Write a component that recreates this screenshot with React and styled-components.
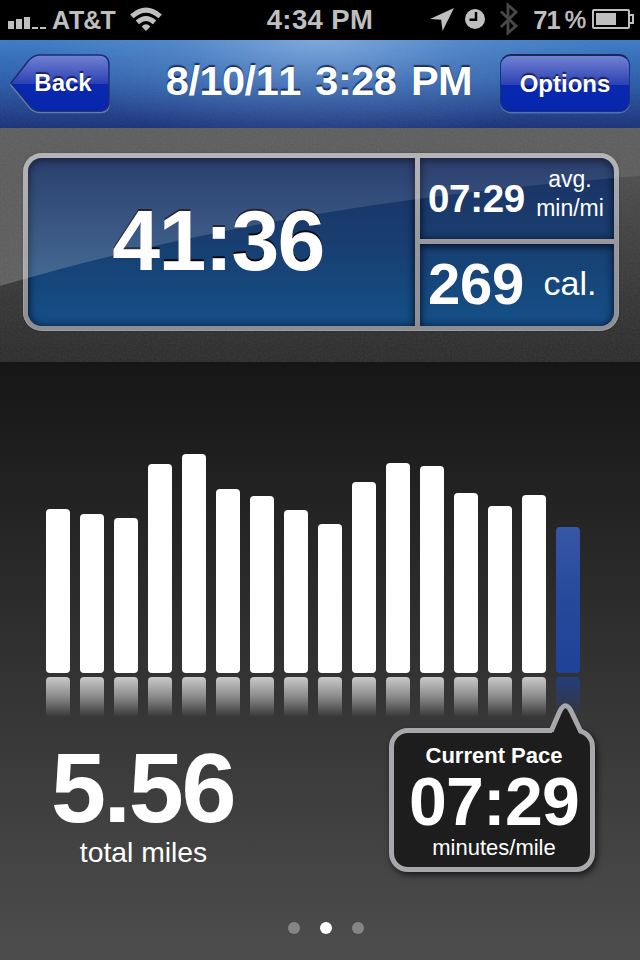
import React from "react"
import styled, { createGlobalStyle, css } from "styled-components"

const GlobalStyle = createGlobalStyle`
  * {
    box-sizing: border-box;
  }

  body {
    margin: 0;
    background: #000;
    font-family: "Liberation Sans", Arial, Helvetica, sans-serif;
    font-kerning: none;
    -webkit-font-smoothing: antialiased;
  }

  svg {
    display: block;
  }
`

const Screen = styled.div`
  display: flex;
  flex-direction: column;
  width: 640px;
  height: 960px;
  overflow: hidden;
  color: #fff;
`

/* Status bar */

const StatusBar = styled.header`
  display: grid;
  grid-template-columns: 1fr auto 1fr;
  align-items: center;
  height: 40px;
  padding: 0 6px 0 8px;
  background: #000;
  color: #bfbfbf;
  font-weight: 700;
  line-height: 40px;
`

const StatusGroup = styled.div`
  display: flex;
  align-items: center;
  justify-content: ${props => (props.$end ? "flex-end" : "flex-start")};
  height: 40px;
`

const Carrier = styled.span`
  width: 84px;
  padding-left: 6px;
  font-size: 25px;
  letter-spacing: -1px;
`

const Clock = styled.time`
  padding-right: 2px;
  font-size: 27.5px;
  letter-spacing: 0.4px;
`

const Percent = styled.span`
  display: flex;
  gap: 5px;
  padding: 0 7px 0 14px;
  font-size: 25.5px;
  letter-spacing: -1px;
`

const PercentSign = styled.span`
  font-size: 24px;
  font-weight: 400;
  -webkit-text-stroke: 0.6px #bfbfbf;
`

/* Navigation bar */

const NavBar = styled.nav`
  position: relative;
  display: flex;
  align-items: center;
  height: 88px;
  padding: 0 10px 2px;
  background: radial-gradient(
      ellipse 290px 105px at 50% 0,
      rgba(175, 205, 240, 0.55),
      rgba(130, 170, 220, 0.26) 50%,
      rgba(130, 170, 220, 0)
    ),
    linear-gradient(#3c7bc6, #2a5ba8 50%, #1b3179);
`

const NavTitle = styled.h1`
  position: relative;
  flex: 1;
  margin: 0;
  padding: 0 0 4px 28px;
  font-size: 41.5px;
  line-height: 80px;
  letter-spacing: -0.5px;
  word-spacing: 3.5px;
  text-align: center;
  white-space: nowrap;
  text-shadow: 0 -2px 1px rgba(10, 25, 60, 0.75);
`

const buttonText = css`
  color: #fff;
  font: 700 24px/58px "Liberation Sans", Arial, sans-serif;
  text-shadow: 0 -2px 1px rgba(5, 10, 70, 0.7);
`

const OptionsButton = styled.button`
  ${buttonText}
  position: relative;
  width: 130px;
  height: 58px;
  padding: 0;
  border: 1.5px solid #1c307f;
  border-top: 2px solid #19275a;
  border-radius: 11px;
  line-height: 54px;
  background: linear-gradient(#7282d2, #4356bd 35%, #2b41b4 52%, #0828b0 53%, #0627ac);
  box-shadow: 0 1.5px 0 rgba(140, 165, 220, 0.45);
`

const BackButton = styled.button`
  ${buttonText}
  position: relative;
  width: 100px;
  height: 58px;
  padding: 0 0 0 6px;
  border: 0;
  background: none;
`

const BackShape = styled.svg`
  position: absolute;
  inset: 0;
`

const ButtonLabel = styled.span`
  position: relative;
`

/* Stats */

const Summary = styled.section`
  position: relative;
  height: 234px;
  padding: 25px 21px 31px 23px;
  background: linear-gradient(#565656, #454545 35%, #353535 72%, #2b2b2b);
`

const StatPanel = styled.div`
  position: relative;
  display: grid;
  grid-template-columns: 387px 1fr;
  grid-template-rows: 81px 1fr;
  gap: 5px;
  height: 178px;
  padding: 5px;
  border-radius: 19px;
  background: linear-gradient(#b0b0b3, #98989c 50%, #8d8e92);
  box-shadow: inset 0 0 0 1px rgba(170, 172, 178, 0.6), 0 0 2px rgba(0, 0, 0, 0.35);
`

const StatCell = styled.div`
  display: flex;
  align-items: center;
  overflow: hidden;
  padding: ${props => (props.$main ? "0 7px 0 0" : "0 0 0 8px")};
  justify-content: ${props => (props.$main ? "center" : "flex-start")};
  grid-row: ${props => (props.$main ? "1 / 3" : "auto")};
  border-radius: ${props => props.$radius};
  background: ${props => props.$fill};
  box-shadow: inset 0 0 10px rgba(0, 10, 30, 0.65), inset 0 3px 6px rgba(0, 5, 20, 0.45);
`

const StatValue = styled.strong`
  width: ${props => props.$width || "auto"};
  padding-bottom: ${props => props.$lift || 0}px;
  padding-top: ${props => props.$drop || 0}px;
  font-size: ${props => props.$size}px;
  line-height: 1;
  letter-spacing: ${props => props.$tracking || 0}px;
  text-shadow: ${props => (props.$engraved ? "0 -2px 0 #05080f" : "none")};
`

const StatUnit = styled.span`
  width: 80px;
  padding-bottom: ${props => props.$lift}px;
  font-size: ${props => props.$size}px;
  line-height: 29px;
  text-align: center;
`

const Gloss = styled.svg`
  position: absolute;
  inset: 0;
  pointer-events: none;
`

const GrainLayer = styled.svg`
  position: absolute;
  inset: 0;
  width: 100%;
  height: 100%;
  opacity: ${props => props.$strength};
  pointer-events: none;
`

/* Chart */

const Details = styled.main`
  display: flex;
  flex: 1;
  flex-direction: column;
  background: linear-gradient(#161616, #4d4d4d);
`

const Chart = styled.div`
  display: flex;
  align-items: flex-end;
  gap: 10px;
  height: 355px;
  padding-left: 46px;
`

const BarColumn = styled.div`
  width: 24px;
`

const Bar = styled.div`
  border-radius: 4px;
  background: ${props =>
    props.$current ? "linear-gradient(#3657a5, #26499b 50%, #1f4199)" : "#fff"};
`

const Reflection = styled.div`
  height: 40px;
  margin-top: 4px;
  border-radius: 4px 4px 0 0;
  background: ${props =>
    props.$current
      ? "linear-gradient(rgba(32, 64, 145, 0.8), rgba(36, 62, 130, 0))"
      : "linear-gradient(rgba(255, 255, 255, 0.74), rgba(255, 255, 255, 0.42) 50%, rgba(255, 255, 255, 0))"};
`

const Totals = styled.div`
  display: flex;
  justify-content: space-between;
  height: 155px;
  padding: 11px 45px 0 43px;
`

const Distance = styled.div`
  width: 201px;
  padding-top: 11px;
  text-align: center;
`

const DistanceValue = styled.div`
  font-size: 99px;
  font-weight: 700;
  line-height: 98px;
  letter-spacing: -2.4px;
  text-indent: -2px;
`

const DistanceLabel = styled.div`
  margin-top: -3px;
  font-size: 28.3px;
  line-height: 36px;
`

const PaceBubble = styled.div`
  position: relative;
  width: 206px;
  height: 144px;
  padding-left: 4px;
  border: 5px solid #a8a8ac;
  border-radius: 19px;
  background: #1d1d1d;
  text-align: center;
  box-shadow: 2px 3px 6px rgba(0, 0, 0, 0.65);
`

const BubbleTail = styled.svg`
  position: absolute;
  top: -32px;
  left: 150px;
`

const PaceLine = styled.div`
  position: relative;
  font-size: ${props => props.$size}px;
  font-weight: ${props => (props.$bold ? 700 : 400)};
  line-height: ${props => props.$height}px;
  letter-spacing: ${props => props.$tracking || 0}px;
`

const Pager = styled.div`
  display: flex;
  justify-content: center;
  gap: 20px;
  padding: 50px 0 0 12px;
`

const Dot = styled.span`
  width: 12px;
  height: 12px;
  border-radius: 50%;
  background: ${props => (props.$active ? "#fff" : "#858585")};
`

const barHeights = [
  164, 159, 155, 209, 219, 184, 177, 163.5, 149, 191.5, 210, 207, 180, 167, 178,
  146,
]

const Signal = () => (
  <svg width="38" height="40" fill="#bfbfbf">
    <path d="M0 21h6v8H0zM8 19h6v10H8zM16 17h6v12h-6zM24 27h6v2h-6zM32 27h6v2h-6z" />
  </svg>
)

const Wifi = () => (
  <svg width="32" height="40" fill="none" stroke="#bfbfbf">
    <path d="M1.8 16.4Q16 3.8 30.2 16.4" strokeWidth="5" />
    <path d="M7.4 22.4Q16 14.6 24.6 22.4" strokeWidth="5" />
    <path d="M11.6 26.6Q16 21.8 20.4 26.6L16 31z" fill="#bfbfbf" stroke="none" />
  </svg>
)

const StatusIcons = () => (
  <svg width="89" height="40" fill="none">
    <path d="M24 8L12.5 31l-1.3-11.3L0 19z" fill="#bfbfbf" />
    <circle cx="45" cy="19" r="10" fill="#bfbfbf" />
    <path d="M46 12v7.7h-6.5" stroke="#000" strokeWidth="2.4" />
    <path
      d="M71 11.5L86 26l-8 7V5l8 7-15 15"
      stroke="#484848"
      strokeWidth="2.8"
    />
  </svg>
)

const Battery = () => (
  <svg width="42" height="40">
    <rect x="1" y="10" width="36" height="18" rx="1" fill="none" stroke="#bfbfbf" strokeWidth="2" />
    <path d="M4 13h20v12H4z" fill="#bfbfbf" />
    <path d="M38 15h3v8h-3" fill="none" stroke="#bfbfbf" strokeWidth="2" />
  </svg>
)

const Grain = ({ id, strength }) => (
  <GrainLayer $strength={strength}>
    <filter id={id}>
      <feTurbulence type="fractalNoise" baseFrequency="0.55" numOctaves="3" />
      <feColorMatrix type="saturate" values="0" />
    </filter>
    <rect width="100%" height="100%" filter={`url(#${id})`} />
  </GrainLayer>
)

const Back = () => (
  <BackButton>
    <BackShape width="100" height="61" viewBox="0 0 100 61">
      <defs>
        <linearGradient id="back-fill" x1="0" y1="0" x2="0" y2="1">
          <stop offset="0" stopColor="#7282d2" />
          <stop offset=".35" stopColor="#4356bd" />
          <stop offset=".51" stopColor="#2b41b4" />
          <stop offset=".52" stopColor="#0828b0" />
          <stop offset="1" stopColor="#0627ac" />
        </linearGradient>
      </defs>
      <path
        d="M1 31L19 8Q25 3 30 3H90Q99 3 99 12V50Q99 58.5 90 58.5H30Q24 58.5 20 54Z"
        fill="none"
        stroke="#a0b4dc"
        strokeOpacity=".5"
        strokeWidth="1.5"
      />
      <path
        d="M1 29L19 6Q24 1 30 1H89Q99 1 99 11V47Q99 57 89 57H30Q24 57 20 52Z"
        fill="url(#back-fill)"
        stroke="#1b2d78"
        strokeWidth="1.6"
      />
    </BackShape>
    <ButtonLabel>Back</ButtonLabel>
  </BackButton>
)

const App = () => {
  return (
    <>
      <GlobalStyle />
      <Screen>
        <StatusBar>
          <StatusGroup>
            <Signal />
            <Carrier>AT&amp;T</Carrier>
            <Wifi />
          </StatusGroup>
          <Clock>4:34 PM</Clock>
          <StatusGroup $end>
            <StatusIcons />
            <Percent>
              71 <PercentSign>%</PercentSign>
            </Percent>
            <Battery />
          </StatusGroup>
        </StatusBar>

        <NavBar>
          <Grain id="nav-grain" strength={0.07} />
          <Back />
          <NavTitle>8/10/11 3:28 PM</NavTitle>
          <OptionsButton>Options</OptionsButton>
        </NavBar>

        <Summary>
          <Grain id="panel-grain" strength={0.1} />
          <StatPanel>
            <StatCell
              $main
              $radius="14px 0 0 14px"
              $fill="linear-gradient(#1b3063, #183e70 50%, #145088)"
            >
              <StatValue $size={86} $lift={5} $tracking={-1.7} $engraved>
                41:36
              </StatValue>
            </StatCell>
            <StatCell $radius="0 14px 0 0" $fill="linear-gradient(#1c3063, #193f70)">
              <StatValue $size={38.5} $width="102px" $drop={2} $tracking={-0.3}>
                07:29
              </StatValue>
              <StatUnit $size={23} $lift={10}>
                avg.
                <br />
                min/mi
              </StatUnit>
            </StatCell>
            <StatCell $radius="0 0 14px 0" $fill="linear-gradient(#183f71, #145088)">
              <StatValue $size={58} $width="102px" $lift={2} $tracking={-0.3}>
                269
              </StatValue>
              <StatUnit $size={34} $lift={3}>
                cal.
              </StatUnit>
            </StatCell>
          </StatPanel>
          <Gloss width="640" height="234">
            <defs>
              <linearGradient id="gloss" x1="0" y1="0" x2="0" y2="1">
                <stop offset="0" stopColor="#fff" stopOpacity=".04" />
                <stop offset="1" stopColor="#fff" stopOpacity=".2" />
              </linearGradient>
            </defs>
            <path d="M0 0H640V48Q280 75 0 158Z" fill="url(#gloss)" />
          </Gloss>
        </Summary>

        <Details>
          <Chart>
            {barHeights.map((height, i) => {
              const current = i === barHeights.length - 1
              return (
                <BarColumn key={i}>
                  <Bar $current={current} style={{ height }} />
                  <Reflection $current={current} />
                </BarColumn>
              )
            })}
          </Chart>
          <Totals>
            <Distance>
              <DistanceValue>5.56</DistanceValue>
              <DistanceLabel>total miles</DistanceLabel>
            </Distance>
            <PaceBubble>
              <BubbleTail width="44" height="37">
                <path d="M8 37V30L16 10Q21.5 1 27 10L35 30V37Z" fill="#1d1d1d" />
                <path
                  d="M7 30.5L15.5 11Q21.5 -1.5 27.5 11L37 31"
                  fill="none"
                  stroke="#a8a8ac"
                  strokeWidth="5"
                />
              </BubbleTail>
              <PaceLine $size={22} $height={45} $bold>
                Current Pace
              </PaceLine>
              <PaceLine $size={68} $height={46} $tracking={-0.8} $bold>
                07:29
              </PaceLine>
              <PaceLine $size={22} $height={48}>
                minutes/mile
              </PaceLine>
            </PaceBubble>
          </Totals>
          <Pager>
            <Dot />
            <Dot $active />
            <Dot />
          </Pager>
        </Details>
      </Screen>
    </>
  )
}

export default App
